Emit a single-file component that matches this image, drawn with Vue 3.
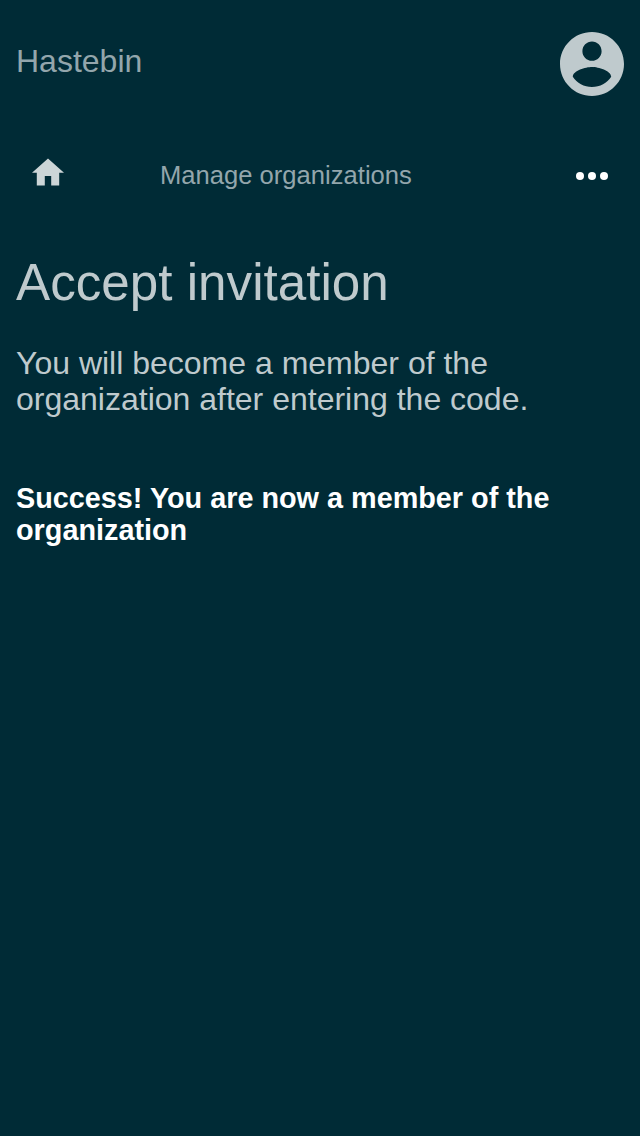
<script setup>
const title = 'Hastebin'
</script>

<template>
  <div class="page">
    <header class="header">
      <span class="brand">{{ title }}</span>
      <svg class="avatar" viewBox="2 2 20 20" aria-hidden="true">
        <path d="M12 2C6.480 2 2 6.480 2 12s4.480 10 10 10 10-4.480 10-10S17.520 2 12 2zm0 3c1.660 0 3 1.340 3 3s-1.340 3-3 3-3-1.340-3-3 1.340-3 3-3zm0 14.200c-2.500 0-4.710-1.280-6-3.220.030-1.990 4-3.080 6-3.080 1.990 0 5.970 1.090 6 3.080-1.290 1.940-3.500 3.220-6 3.220z" />
      </svg>
    </header>
    <nav class="nav">
      <svg class="home" viewBox="2 2.750 20 17.500" aria-hidden="true"><path d="M10 20v-6h4v6h5v-8h3L12 3 2 12h3v8z" /></svg>
      <span class="crumb">Manage organizations</span>
      <svg class="more" viewBox="0 0 32 8" aria-hidden="true">
        <circle cx="4" cy="4" r="4" /><circle cx="16" cy="4" r="4" /><circle cx="28" cy="4" r="4" />
      </svg>
    </nav>
    <main>
      <h1>Accept invitation</h1>
      <p class="intro">You will become a member of the organization after entering the code.</p>
      <p class="success">Success! You are now a member of the organization</p>
    </main>
  </div>
</template>

<style>
body { background: #002b36; }
</style>

<style scoped>
.page {
  box-sizing: border-box;
  min-height: 1136px;
  padding: 0 16px;
  background: #002b36;
  color: #bfcacd;
  font-family: "Liberation Sans", Arial, sans-serif;
}
.header { display: flex; justify-content: space-between; height: 128px; }
.brand { margin-top: 43px; font-size: 32px; line-height: 36px; color: #93a6ac; }
.avatar { width: 64px; height: 64px; margin-top: 32px; fill: #bfcacd; }
.nav { display: flex; height: 96px; padding: 0 16px; }
.home { width: 32px; height: 28px; margin-top: 30px; fill: #ccd5d7; }
.crumb { margin: 32px auto 0 96px; font-size: 25.600px; line-height: 30px; color: #93a6ac; }
.more { width: 32px; height: 8px; margin-top: 44px; fill: #fff; }
h1 { margin: 30px 0 0; font-size: 51.200px; line-height: 58px; font-weight: 400; }
.intro { margin: 33px 0 0; font-size: 32px; line-height: 36px; }
.success { margin: 65px 0 0; font-size: 28.800px; line-height: 32px; font-weight: 700; color: #fff; }
</style>
